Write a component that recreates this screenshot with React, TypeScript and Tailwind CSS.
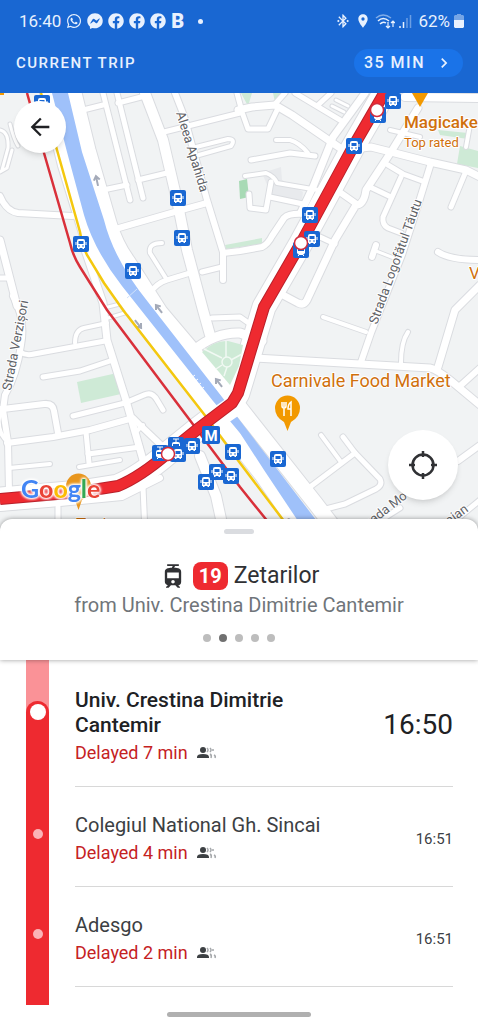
import React from 'react';
import { FaWhatsapp, FaFacebookMessenger, FaFacebook } from 'react-icons/fa';
import { MdBluetoothConnected, MdLocationOn, MdTram, MdChevronRight, MdArrowBack } from 'react-icons/md';

interface Stop {
  name: string;
  delay: string;
  time: string;
  current?: boolean;
}

const stops: Stop[] = [
  { name: 'Univ. Crestina Dimitrie Cantemir', delay: 'Delayed 7 min', time: '16:50', current: true },
  { name: 'Colegiul National Gh. Sincai', delay: 'Delayed 4 min', time: '16:51' },
  { name: 'Adesgo', delay: 'Delayed 2 min', time: '16:51' },
];

// [path, width]
const roads: [string, number][] = [
  // west bank
  ['M0 196Q6 211 18 213L72 216', 6],
  ['M0 240L17 306', 7],
  ['M0 278H9', 5],
  ['M0 130Q9 132 8 148L2 170', 3],
  ['M10 124Q14 140 18 146', 3],
  ['M0 172L7 168L12 150', 3],
  ['M13 296Q26 320 21 345Q17 375 5 395L3 410L8 442L9 492', 6],
  ['M1 408Q-6 430 8 442', 4],
  ['M85 250L103 303L107 340L125 397L143 460', 7],
  ['M104 308L124 303M108 318L128 312', 3],
  ['M107 323L84 328Q75 330 75 343', 4],
  ['M20 352Q26 356 34 354L105 341', 5],
  ['M43 377L80 371L113 360', 5],
  ['M73 416L125 403L144 395Q152 391 157 400L163 410', 5],
  ['M7 443L53 437L90 430L133 418L142 427L162 446', 6],
  ['M136 432L143 425', 4],
  ['M3 409L44 404Q53 403 54 411L58 433', 6],
  ['M86 432L89 463', 5],
  ['M88 454L140 447', 5],
  ['M79 467L120 460', 4],
  ['M9 468L50 464', 4],
  ['M0 508L60 503L122 497L160 478', 6],
  ['M58 507V533', 5],
  ['M143 487L145 533', 5],
  ['M200 456L216 496L224 533', 10],
  // centre
  ['M103 93L130 200', 5],
  ['M117 93L143 198', 5],
  ['M83 110L103 105M118 103L145 96', 5],
  ['M138 180L167 173M103 190L127 185', 5],
  ['M145 93L163 140L177 200L187 250L203 310L210 335', 10],
  ['M175 93L184 116L207 200L223 252V280', 6],
  ['M160 133L240 113', 5],
  ['M196 147L228 139Q236 139 231 146L199 155', 4],
  ['M112 230L178 211L207 203', 6],
  ['M162 243Q148 243 150 253L167 280', 4],
  ['M150 293Q157 283 167 280L190 273', 5],
  ['M202 272L222 267', 5],
  ['M194 350Q216 332 240 333L262 341', 9],
  ['M212 318L240 317L250 324', 5],
  ['M223 253L240 251L262 247Q268 244 272 236L284 218Q289 213 304 214', 6],
  // north east
  ['M238 110L252 107L275 105L292 115L343 150L371 147L391 152L430 162L466 170L480 177', 7],
  ['M242 112L248 129H268L278 108', 5],
  ['M276 103L285 93M241 108L237 93', 5],
  ['M295 93L340 120M318 105L331 93', 5],
  ['M336 100L348 106M332 106L344 112', 3],
  ['M365 93L333 137L313 187L301 212', 7],
  ['M276 140H290Q300 143 308 153', 4],
  ['M251 160L290 153L315 156', 5],
  ['M245 176L266 173Q274 176 277 183L318 190', 4],
  ['M271 182L266 210L250 208L249 194M270 197L303 204', 5],
  ['M480 98L405 97', 8],
  ['M418 108L391 152L366 190Q364 205 356 205L335 240L307 300Q304 306 298 303L281 294', 7],
  ['M341 193L358 205', 6],
  ['M370 187L391 197', 5],
  ['M388 165L403 174L425 182', 5],
  ['M401 177L383 217Q382 225 388 228L401 233', 5],
  ['M431 163L418 205L402 255L371 333L361 362', 6],
  ['M466 171L451 207', 5],
  ['M438 252Q450 260 480 260', 6],
  ['M320 237L335 244', 5],
  ['M376 245L372 257', 6],
  ['M376 251L394 258', 3],
  ['M480 285L455 310L438 367', 7],
  ['M390 130L420 137M466 147L470 125', 4],
  // east
  ['M255 358L360 364L430 368Q436 369 450 380L480 405', 7],
  ['M323 317L366 332', 4],
  ['M408 332Q401 342 401 363', 4],
  ['M460 386L480 368', 6],
  ['M306 490L355 453L343 437', 5],
  ['M321 435L341 462', 4],
  ['M355 453L380 479Q383 485 376 489L345 504L322 510', 5],
  ['M458 461L480 445', 6],
  ['M360 533L400 508', 5],
  ['M440 533L480 500', 5],
];

const eastBank = 'M74 93L88 150L109 223Q116 246 128 262L160 312L220 383L240 408L315 503L338 533';
const westBank = 'M48 93L66 165L88 236Q96 260 112 280L160 343L225 427L262 474L303 533';
const route = 'M386 90L353 147L301 243L264 307L238 393L232 403L199 428L168 453Q140 477 118 486L80 492L0 499';
const river =
  'M52 93L67 152L84 215Q94 250 122 286L213 401L240 433L264 470L306 533H326L238 418L222 397L148 302Q114 260 104 220L82 152L68 93Z';

const busStops = [
  [42, 103], [178, 198], [182, 238], [81, 244], [133, 271], [393, 101], [354, 146],
  [310, 215], [312, 239], [178, 454], [192, 446], [233, 452], [217, 472], [231, 476], [206, 482], [278, 459],
];

const tramStops = [[378, 115], [301, 250], [160, 453], [176, 445]];

const routeStops = [[377, 110], [301, 243], [168, 454]];

const bankArrows = [[97, 181, -12], [159, 309, -38], [219, 383, -38], [138, 324, 142]];

function StopMarker({ x, y, tram }: { x: number; y: number; tram?: boolean }) {
  return (
    <g transform={`translate(${x} ${y})`}>
      <rect x="-8" y="-8" width="16" height="16" rx="2" fill="#1967d2" />
      {tram ? (
        <>
          <path d="M-3-6H3M0-6V-3" stroke="#fff" strokeWidth="1" />
          <path d="M-4-1Q-4-3-2-3H2Q4-3 4-1V3L2 5H-2L-4 3Z" fill="#fff" />
          <path d="M-3-1H3V1H-3Z" fill="#1967d2" />
          <path d="M-3 6L-1 4M3 6L1 4" stroke="#fff" />
        </>
      ) : (
        <>
          <path d="M-4-3Q-4-5-2-5H2Q4-5 4-3V4H3V5H1.500V4H-1.500V5H-3V4H-4Z" fill="#fff" />
          <path d="M-5-2V1M5-2V1" stroke="#fff" strokeWidth="1" />
          <path d="M-2.500-3H2.500V0H-2.500Z" fill="#1967d2" />
          <circle cx="-2" cy="2" r=".8" fill="#1967d2" />
          <circle cx="2" cy="2" r=".8" fill="#1967d2" />
        </>
      )}
    </g>
  );
}

function TripMap() {
  return (
    <svg viewBox="0 93 478 440" className="block h-auto w-full bg-[#f1f3f4]" role="img" aria-label="Map of the current trip">
      {/* Parks */}
      <g fill="#ceead6">
        <path d="M77 382L117 373L121 394L81 403Z" />
        <path d="M239 181L247 179L249 197L240 199Z" fill="#a8dab5" />
        <path d="M438 130L468 133V139L440 135ZM460 146L478 151V168L457 164Z" />
        <path d="M225 245L262 238V244L226 249Z" />
        <path d="M241 93H252L248 106ZM273 93H281L275 102Z" />
      </g>
      <path d="M262 173L281 167L282 180L303 192L302 200L272 196Z" fill="#e8eaed" />
      <g fill="none" strokeLinecap="round" strokeLinejoin="round">
        <g stroke="#dadce0">
          {roads.map(([d, w]) => (
            <path key={d} d={d} strokeWidth={w + 2} />
          ))}
          <path d={eastBank} strokeWidth="17" />
          <path d={westBank} strokeWidth="18" />
          <path d={route} strokeWidth="25" />
        </g>
        <g stroke="#fff">
          {roads.map(([d, w]) => (
            <path key={d} d={d} strokeWidth={w} />
          ))}
          <path d={eastBank} strokeWidth="15" />
          <path d={westBank} strokeWidth="16" />
          <path d={route} strokeWidth="23" />
        </g>
      </g>

      <path d="M202 352Q215 340 228 341L243 345L239 366L230 385Z" fill="#ceead6" />
      <g fill="none" stroke="#f1f9f3" strokeWidth="1.5">
        <circle cx="227" cy="362" r="5" />
        <path d="M204 349L222 358M226 341V357M231 360L242 354M227 367L224 376M222 365L216 369" />
      </g>

      <path d={river} fill="#9fc1fa" />
      <path d="M127 298L137 289" stroke="#d2e3fc" strokeWidth="1" />
      <path d="M191 378L195 375M194 382L198 379M197 386L201 383M200 390L204 387" stroke="#fff" />
      <path d="M196 432L240 402" stroke="#fff" strokeWidth="21" />

      <g fill="none" stroke="#a4aab8" strokeWidth="2">
        {bankArrows.map(([x, y, angle]) => (
          <path key={`${x}-${y}`} d="M0 5V-4M-3-1L0-5L3-1" transform={`translate(${x} ${y}) rotate(${angle})`} />
        ))}
      </g>

      {/* Metro lines */}
      <path d="M41 93L57 150L80 232Q82 245 87 255L104 283L123 310L207 418L240 463L293 533" fill="none" stroke="#f4c80e" strokeWidth="2.5" />
      <path d="M27 93L44 153L70 243Q73 256 80 267L107 310L195 427L240 487L277 533" fill="none" stroke="#d9303a" strokeWidth="2.5" />

      {/* Tram 19 */}
      <path d={route} fill="none" stroke="#b9202a" strokeWidth="12" strokeLinejoin="round" />
      <path d={route} fill="none" stroke="#ee2a30" strokeWidth="10" strokeLinejoin="round" />

      {tramStops.map(([x, y]) => (
        <StopMarker key={`t${x}-${y}`} x={x} y={y} tram />
      ))}
      {busStops.map(([x, y]) => (
        <StopMarker key={`b${x}-${y}`} x={x} y={y} />
      ))}
      {routeStops.map(([x, y]) => (
        <circle key={`r${x}-${y}`} cx={x} cy={y} r="6.5" fill="#fff" stroke="#d22c3c" strokeWidth="1.5" />
      ))}
      <rect x="202" y="426" width="18" height="18" rx="2" fill="#1967d2" />
      <text x="211" y="441" textAnchor="middle" className="fill-white font-['Roboto',sans-serif] text-[15px] font-bold">M</text>

      {/* Places */}
      <path d="M412 93H428L420 107Z" fill="#f29900" />
      <path d="M0 93H4V95H0Z" fill="#f29900" />
      <path d="M287.500 431L284 422Q275 417 275 408A12.500 12.500 0 0 1 300 408Q300 417 291 422Z" fill="#f29900" />
      <path d="M282 402V406Q282 408 284 408V416M284 402V407M286 402V406Q286 408 284 408M291 416V402Q288 404 288 409H291" fill="none" stroke="#fff" strokeWidth="1.500" />
      <path d="M78.500 510L75 500Q66 495 66 486A12.500 12.500 0 0 1 91 486Q91 495 82 500Z" fill="#e8961d" />

      <g className="fill-[#d0700c] font-['Roboto',sans-serif]" stroke="#fff" strokeWidth="2" strokeLinejoin="round" paintOrder="stroke">
        <text x="404" y="128" className="text-[17px] font-medium">Magicake</text>
        <text x="404" y="147" className="text-[13px]">Top rated</text>
        <text x="271" y="387" className="text-[18px]">Carnivale Food Market</text>
        <text x="469" y="279" className="text-[17px]">V</text>
        <text x="76" y="530" className="text-[17px]">Teo's</text>
      </g>
      <g className="fill-[#5f6368] font-['Roboto',sans-serif] text-[13px]" stroke="#fff" strokeWidth="2" strokeLinejoin="round" paintOrder="stroke">
        <text transform="translate(176 113) rotate(73)">Aleea Apahida</text>
        <text transform="translate(377 325) rotate(-70)">Strada Logofătul Tăutu</text>
        <text transform="translate(11 391) rotate(-79)">Strada Verzișori</text>
        <text transform="translate(361 534) rotate(-38)">Strada Mo</text>
        <text transform="translate(440 532) rotate(-36)">Traian</text>
        <text transform="translate(288 527) rotate(-38)">o</text>
      </g>

      <text x="21" y="498" className="font-['Lato',sans-serif] text-[25px] font-bold drop-shadow-[0_0_1px_#fff] [filter:drop-shadow(0_0_1px_#fff)_drop-shadow(0_0_1px_#fff)_drop-shadow(0_0_1px_#fff)]">
        <tspan fill="#4285f4">G</tspan>
        <tspan fill="#ea4335">o</tspan>
        <tspan fill="#fbbc04">o</tspan>
        <tspan fill="#4285f4">g</tspan>
        <tspan fill="#34a853">l</tspan>
        <tspan fill="#ea4335">e</tspan>
      </text>
    </svg>
  );
}

function StatusBar() {
  return (
    <div className="flex h-[42px] items-center justify-between pr-[14px] pl-[19px] text-[17px] leading-5 text-[#e8f1fe]">
      <div className="flex items-center gap-[5px]">
        <span>16:40</span>
        <FaWhatsapp className="size-4" />
        <FaFacebookMessenger className="size-4" />
        <FaFacebook className="size-4" />
        <FaFacebook className="size-4" />
        <FaFacebook className="size-4" />
        <span className="text-[20px] font-black">B</span>
        <span className="ml-[9px] size-[5px] rounded-full bg-[#e8f1fe]" />
      </div>
      <div className="flex items-center gap-1">
        <MdBluetoothConnected className="size-4" />
        <MdLocationOn className="size-4" />
        <svg viewBox="0 0 20 16" className="w-5" fill="none" stroke="currentColor" strokeWidth="1.500">
          <path d="M1 5Q8-1 16 5" opacity=".5" />
          <path d="M3 8Q8 3 14 8M5 11Q8 8 11 10" />
          <path d="M13 9V15M11 13L13 15L15 13M18 14V8M16 10L18 8L20 10" strokeWidth="1.200" />
        </svg>
        <svg viewBox="0 0 13 14" className="w-[13px]" stroke="currentColor" strokeWidth="1.500">
          <path d="M1 14V12M4.500 14V8" />
          <path d="M8 14V4M11.500 14V1" opacity=".4" />
        </svg>
        <span className="ml-0.5">62%</span>
        <svg viewBox="0 0 10 14" className="w-[10px]" fill="currentColor">
          <path d="M3 0H7V1H9L10 2V6H0V2L1 1H3Z" opacity=".45" />
          <path d="M0 6H10V13L9 14H1L0 13Z" />
        </svg>
      </div>
    </div>
  );
}

function CrowdIcon() {
  return (
    <svg viewBox="0 0 20 12" className="w-5 shrink-0" role="img" aria-label="Not too crowded">
      <circle cx="6" cy="3" r="3" fill="#3c4043" />
      <path d="M0 11V10Q0 7 6 7T12 10V11Z" fill="#3c4043" />
      <path d="M10 1Q12 3 10 5M13 1Q15 3 13 5M16 2V4M13 7Q15 8 14 11M17 8Q19 9 18 11" fill="none" stroke="#a5a8ab" strokeWidth="1.500" />
    </svg>
  );
}

function StopRow({ stop }: { stop: Stop }) {
  return (
    <li className="flex pl-[26px]">
      {stop.current ? (
        <div className="flex w-[23px] shrink-0 flex-col bg-[#fa9297] pt-[41px]">
          <div className="flex flex-1 justify-center rounded-t-full bg-[#ee2a30] pt-[3px]">
            <span className="size-4 rounded-full bg-white" />
          </div>
        </div>
      ) : (
        <div className="flex w-[23px] shrink-0 justify-center bg-[#ee2a30] pt-[42px]">
          <span className="size-[10px] rounded-full bg-[#fbb3b6]" />
        </div>
      )}
      <div
        className={`mr-[25px] ml-[26px] flex flex-1 items-center justify-between border-b border-[#d8d8d8] ${
          stop.current ? 'pt-7 pb-5' : 'pt-[25px] pb-5'
        }`}
      >
        <div>
          <h2 className={stop.current ? 'max-w-[240px] text-[21px] leading-[25px] font-medium text-[#202124]' : 'text-[20px] leading-[26px] text-[#3c4043]'}>
            {stop.name}
          </h2>
          <p className="flex items-center gap-[9px] pt-0.5 text-[18px] leading-[26px] text-[#c5221f]">
            {stop.delay}
            <CrowdIcon />
          </p>
        </div>
        <time className={stop.current ? 'pb-1 text-[28px] leading-8 text-[#202124]' : 'text-[15px] leading-5 text-[#3c4043]'}>
          {stop.time}
        </time>
      </div>
    </li>
  );
}

export default function App() {
  return (
    <div className="flex min-h-screen w-full flex-col overflow-hidden bg-white font-['Roboto',sans-serif]">
      <header className="bg-[#1967d2]">
        <StatusBar />
        <div className="flex items-center justify-between pt-[7px] pr-[15px] pb-4 pl-4">
          <h1 className="text-[15px] leading-5 font-medium tracking-[1.5px] text-[#e8f1fe]">CURRENT TRIP</h1>
          <button className="flex h-7 items-center gap-[9px] rounded-full bg-[#1a73e8] pr-[9px] pl-[10px] text-[16px] font-medium tracking-[1.5px] text-[#e8f1fe]">
            35 MIN
            <MdChevronRight className="size-5" />
          </button>
        </div>
      </header>

      <div className="relative">
        <TripMap />
        <button
          aria-label="Back"
          className="absolute top-2 left-[14px] flex size-[52px] items-center justify-center rounded-full bg-white text-[#202124] shadow-md"
        >
          <MdArrowBack className="size-7" />
        </button>
        <button
          aria-label="Centre on my location"
          className="absolute right-5 bottom-[33px] flex size-[70px] items-center justify-center rounded-full bg-white shadow-md"
        >
          <svg viewBox="0 0 28 28" className="size-7" fill="none" stroke="#303134" strokeWidth="2.500">
            <circle cx="14" cy="14" r="10.500" />
            <path d="M14 0V6M14 22V28M0 14H6M22 14H28" />
          </svg>
        </button>
      </div>

      <section className="relative z-10 -mt-[14px] flex flex-col items-center rounded-t-xl bg-white pt-[10px] pb-[18px] shadow-[0_0_5px_rgba(0,0,0,0.4)]">
        <span className="h-[5px] w-[30px] rounded-full bg-[#dadce0]" />
        <div className="mt-7 flex items-center">
          <MdTram className="mr-[6px] size-7 text-[#303134]" />
          <span className="mr-[6px] rounded-lg bg-[#ee2a30] px-[6px] text-[20px] leading-7 font-bold text-white">19</span>
          <span className="text-[23px] leading-7 text-[#303134]">Zetarilor</span>
        </div>
        <p className="mt-0.5 text-[20px] leading-[26px] text-[#70757a]">from Univ. Crestina Dimitrie Cantemir</p>
        <div className="mt-4 flex gap-2">
          <span className="size-2 rounded-full bg-[#bdbdbd]" />
          <span className="size-2 rounded-full bg-[#707070]" />
          <span className="size-2 rounded-full bg-[#bdbdbd]" />
          <span className="size-2 rounded-full bg-[#bdbdbd]" />
          <span className="size-2 rounded-full bg-[#bdbdbd]" />
        </div>
      </section>

      <ol>
        {stops.map((stop) => (
          <StopRow key={stop.name} stop={stop} />
        ))}
      </ol>
      <div className="ml-[26px] h-[18px] w-[23px] bg-[#ee2a30]" />
      <div className="mt-[7px] mb-[7px] h-[5px] w-[30%] self-center rounded-full bg-[#b0b0b0]" />
    </div>
  );
}
